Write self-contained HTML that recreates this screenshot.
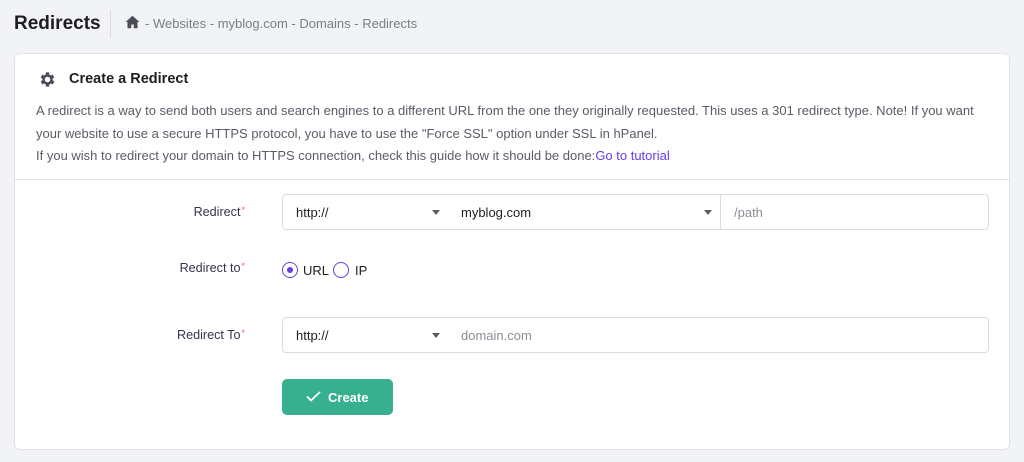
<!DOCTYPE html>
<html><head><style>
*{box-sizing:border-box;margin:0;padding:0}
body{width:1024px;height:462px;background:#f2f3f6;font-family:"Liberation Sans",sans-serif;position:relative;overflow:hidden;color:#2f1c6a}
.abs{position:absolute}
h1{position:absolute;left:14px;top:13px;font-size:19px;font-weight:bold;color:#1d1e20}
.sep{position:absolute;left:110px;top:10px;width:1px;height:28px;background:#dcdce2}
.bc{position:absolute;left:126px;top:16px;font-size:13px;color:#7b7d88}
.card{position:absolute;left:14px;top:53px;width:996px;height:397px;background:#fff;border:1px solid #e2e3e8;border-radius:6px}
.ttl{position:absolute;left:54px;top:17px;font-size:14.5px;font-weight:bold;color:#1d1e20}
.desc{position:absolute;left:21px;top:46px;width:958px;font-size:13px;line-height:22.5px;color:#5a5b66}
.desc a{color:#673de6;text-decoration:none}
.hr{position:absolute;left:0;top:125px;width:100%;height:1px;background:#e2e3e8}
.lbl{position:absolute;font-size:12.6px;color:#36344d;text-align:right;width:200px}
.lbl i{color:#fc5185;font-style:normal;font-size:9px;vertical-align:top;margin-left:1px}
.f{position:absolute;height:36px;border:1px solid #dadce0;background:#fff;font-size:13px;color:#1d1e20;padding:10px 13px}
.ph{color:#8c8d96}
.car{position:absolute;right:8px;top:15px;width:0;height:0;border-left:4.5px solid transparent;border-right:4.5px solid transparent;border-top:5px solid #5a5b66}
.rad{position:absolute;width:16px;height:16px;border:1.5px solid #673de6;border-radius:50%}
.btn{position:absolute;left:267px;top:325px;width:111px;height:36px;background:#36b08e;border-radius:5px;color:#fff;font-weight:bold;font-size:13px;padding:11px 0 0 46px}
</style></head><body>
<h1>Redirects</h1><div class="sep"></div>
<svg class="abs" style="left:125px;top:15px" width="15" height="14" viewBox="0 0 24 22"><path d="M12 1L1 11h3v10h6v-6h4v6h6V11h3z" fill="#4a4b57"/></svg>
<div class="bc" style="left:145px">- Websites - myblog.com - Domains - Redirects</div>
<div class="card">
<svg class="abs" style="left:23px;top:16px" width="19" height="19" viewBox="0 0 24 24"><path fill="#4a4b57" d="M19.4 13a7.5 7.5 0 000-2l2.1-1.6-2-3.5-2.5 1a7.5 7.5 0 00-1.7-1L15 3h-4l-.4 2.9a7.5 7.5 0 00-1.700 1l-2.5-1-2 3.5L6.6 11a7.5 7.5 0 000 2l-2.1 1.6 2 3.5 2.5-1a7.5 7.5 0 001.7 1L11 21h4l.4-2.9a7.5 7.5 0 001.7-1l2.5 1 2-3.5zM13 15.5a3.5 3.5 0 110-7 3.5 3.5 0 010 7z" transform="translate(-1 0)"/></svg>
<div class="ttl">Create a Redirect</div>
<div class="desc">A redirect is a way to send both users and search engines to a different URL from the one they originally requested. This uses a 301 redirect type. Note! If you want your website to use a secure HTTPS protocol, you have to use the "Force SSL" option under SSL in hPanel.<br>If you wish to redirect your domain to HTTPS connection, check this guide how it should be done:<a>Go to tutorial</a></div>
<div class="hr"></div>
<div class="lbl" style="left:30px;top:151px">Redirect<i>*</i></div>
<div class="f" style="left:267px;top:140px;width:167px;border-radius:4px 0 0 4px">http://<span class="car"></span></div>
<div class="f" style="left:433px;top:140px;width:273px;border-left:none">myblog.com<span class="car"></span></div>
<div class="f ph" style="left:705px;top:140px;width:269px;border-radius:0 4px 4px 0">/path</div>
<div class="lbl" style="left:30px;top:207px">Redirect to<i>*</i></div>
<div class="rad" style="left:267px;top:208px"><div style="position:absolute;left:3.5px;top:3.5px;width:6px;height:6px;border-radius:50%;background:#673de6"></div></div>
<div class="abs" style="left:288px;top:209px;font-size:13px;color:#1d1e20">URL</div>
<div class="rad" style="left:318px;top:208px"></div>
<div class="abs" style="left:340px;top:209px;font-size:13px;color:#1d1e20">IP</div>
<div class="lbl" style="left:30px;top:274px">Redirect To<i>*</i></div>
<div class="f" style="left:267px;top:263px;width:167px;border-radius:4px 0 0 4px">http://<span class="car"></span></div>
<div class="f ph" style="left:433px;top:263px;width:541px;border-left:none;border-radius:0 4px 4px 0">domain.com</div>
<div class="btn"><svg class="abs" style="left:24px;top:12px" width="15" height="11" viewBox="0 0 15 11"><path d="M1 5.5l4 4L14 1" stroke="#fff" stroke-width="1.8" fill="none"/></svg>Create</div>
</div>
</body></html>
